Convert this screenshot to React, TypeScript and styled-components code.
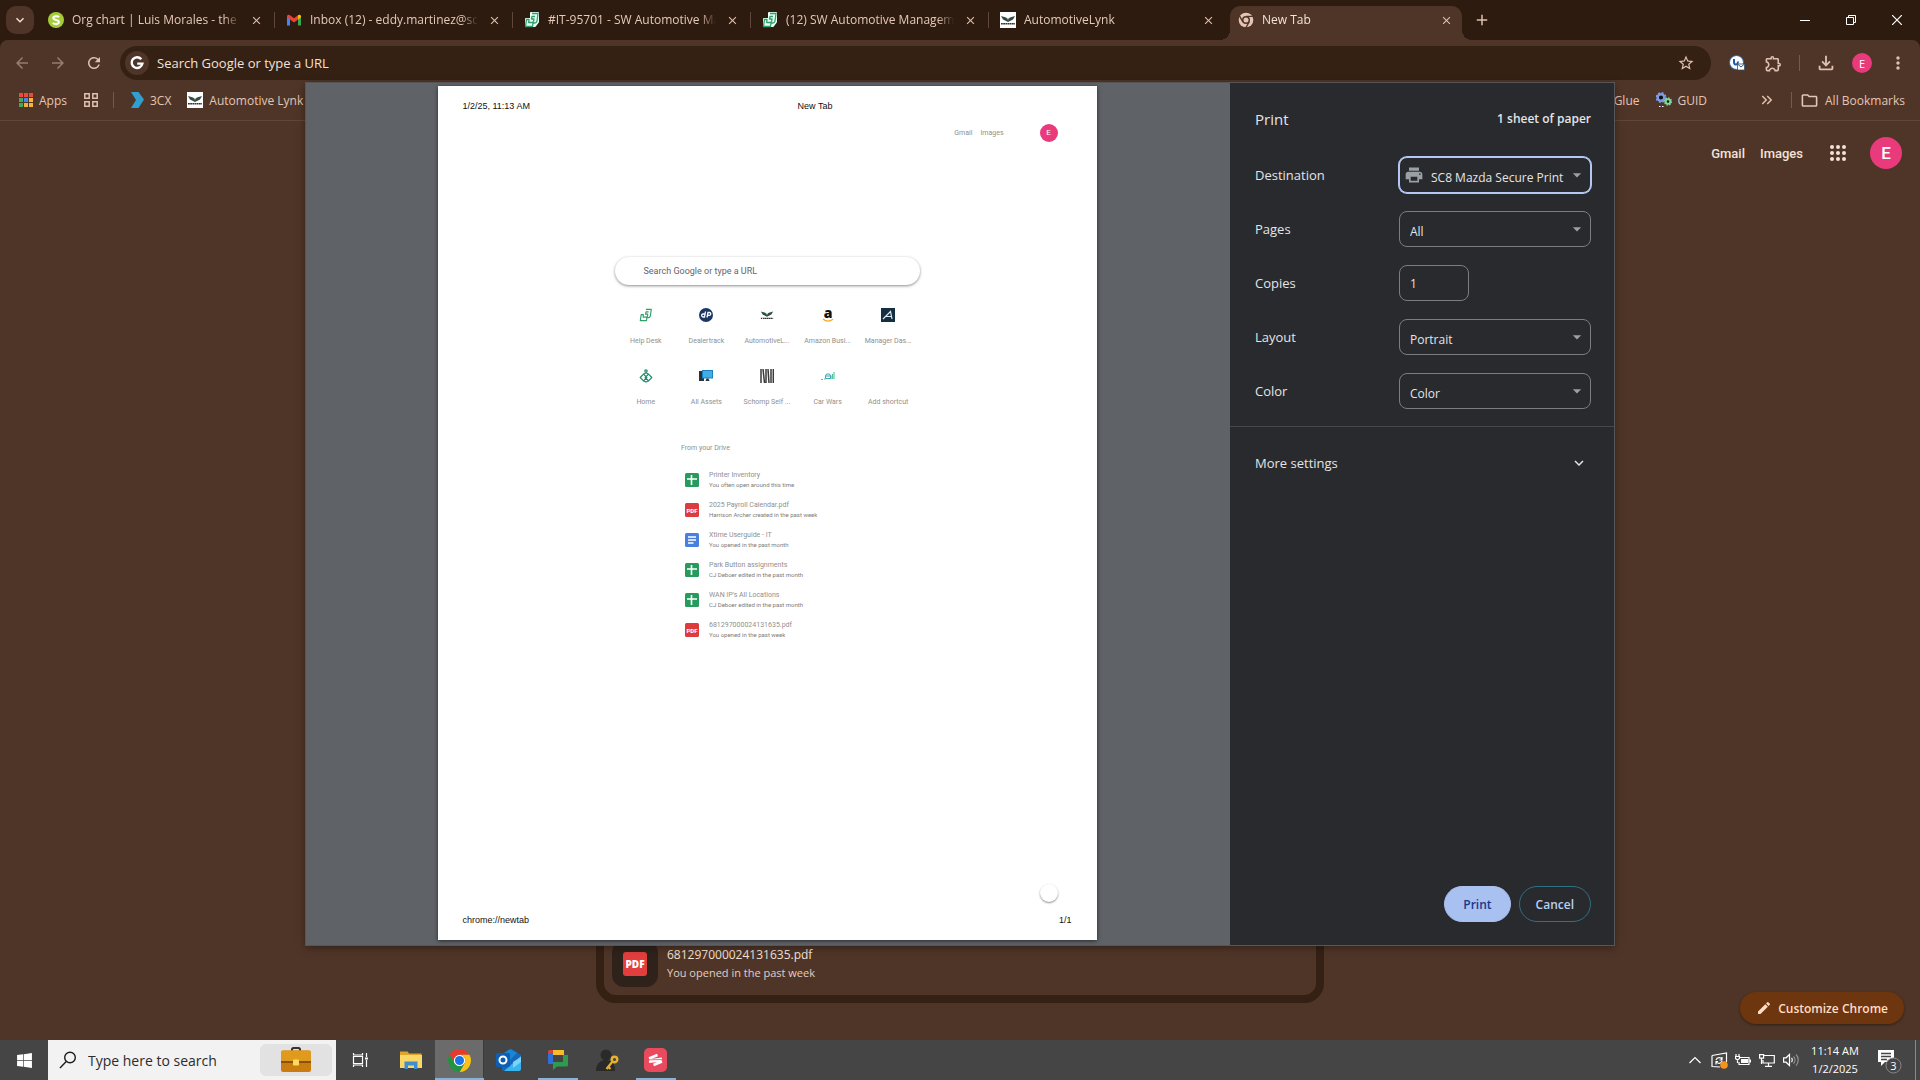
import React from "react";
import styled, { createGlobalStyle, css } from "styled-components";
import {
  MdArrowBack,
  MdArrowForward,
  MdRefresh,
  MdStarBorder,
  MdOutlineExtension,
  MdMoreVert,
  MdOutlineFolder,
  MdPrint,
  MdEdit,
  MdExpandMore,
  MdArrowDropDown,
  MdClose,
  MdAdd,
  MdOutlineFileDownload,
  MdKeyboardDoubleArrowRight,
} from "react-icons/md";
import { FaWindows } from "react-icons/fa";

const c = {
  frame: "#2e1b0f",
  surface: "#4f3527",
  field: "#352014",
  line: "#61463a",
  tint: "#e0c0ae",
  text: "#f3e2d8",
  panel: "#292a2d",
  blue: "#a8c1f0",
};

const GlobalStyle = createGlobalStyle`
  *, *::before, *::after { box-sizing: border-box; }
  body {
    margin: 0;
    background: ${c.surface};
    color: ${c.text};
    font-family: "Open Sans", "Noto Sans", sans-serif;
    font-size: 12px;
  }
  button, input, select { font: inherit; color: inherit; margin: 0; }
  button { background: none; border: 0; padding: 0; cursor: pointer; }
  a { color: inherit; text-decoration: none; }
  svg { display: block; flex: none; }
  ul, h1, h2, p { margin: 0; padding: 0; list-style: none; font-weight: 400; }
`;

const Screen = styled.div`
  display: flex;
  flex-direction: column;
  min-height: 100vh;
`;

const Browser = styled.div`
  position: relative;
  flex: 1;
  display: flex;
  flex-direction: column;
  background: ${c.surface};
`;

/* ---------- tab strip ---------- */

const TabStrip = styled.header`
  display: flex;
  height: 40px;
  background: ${c.frame};
`;

const TabSearch = styled.button`
  display: grid;
  place-items: center;
  width: 28px;
  height: 28px;
  margin: 6px 3px 0 6px;
  border-radius: 10px;
  background: ${c.surface};
`;

const TabSlot = styled.div<{ $divider?: boolean }>`
  position: relative;
  flex: 0 1 238px;
  min-width: 0;
  padding: 6px 3px 0;
  ${(p) =>
    p.$divider &&
    css`
      &::after {
        content: "";
        position: absolute;
        right: 0;
        top: 12px;
        width: 1px;
        height: 16px;
        background: ${c.line};
      }
    `}
`;

const TabBody = styled.div<{ $active?: boolean }>`
  position: relative;
  display: flex;
  align-items: center;
  gap: 8px;
  height: 34px;
  padding: 0 8px 6px;
  color: ${(p) => (p.$active ? c.text : "#e6c9b8")};
  ${(p) =>
    p.$active &&
    css`
      background: ${c.surface};
      border-radius: 10px 10px 0 0;
      &::before,
      &::after {
        content: "";
        position: absolute;
        bottom: 0;
        width: 10px;
        height: 10px;
      }
      &::before {
        left: -10px;
        background: radial-gradient(circle at 0 0, transparent 10px, ${c.surface} 10px);
      }
      &::after {
        right: -10px;
        background: radial-gradient(circle at 100% 0, transparent 10px, ${c.surface} 10px);
      }
    `}
`;

const TabTitle = styled.button`
  flex: 1;
  min-width: 0;
  overflow: hidden;
  text-align: left;
  white-space: nowrap;
  line-height: 20px;
  mask-image: linear-gradient(to right, #000 calc(100% - 16px), transparent);
`;

const IconButton = styled.button<{ $size?: number; $dim?: boolean }>`
  display: grid;
  place-items: center;
  flex: none;
  width: ${(p) => p.$size ?? 36}px;
  height: ${(p) => p.$size ?? 36}px;
  color: ${c.tint};
  opacity: ${(p) => (p.$dim ? 0.5 : 1)};
`;

const NewTab = styled(IconButton)`
  width: 34px;
  margin-top: 2px;
`;

const WindowControls = styled.div`
  display: flex;
  margin-left: auto;
`;

const WindowButton = styled.button`
  display: grid;
  place-items: center;
  width: 46px;
  height: 40px;
  color: #fff;
`;

/* ---------- toolbar ---------- */

const Chrome = styled.div`
  border-bottom: 1px solid ${c.line};
  background: ${c.surface};
  border-radius: 8px 8px 0 0;
`;

const ChromeBacking = styled.div`
  background: linear-gradient(${c.frame} 12px, ${c.surface} 12px);
`;

const Toolbar = styled.div`
  display: flex;
  align-items: center;
  height: 42px;
  padding: 5px 4px 1px;
`;

const Omnibox = styled.form`
  flex: 1;
  display: flex;
  align-items: center;
  height: 34px;
  margin: 0 8px;
  padding: 0 7px 0 5px;
  border-radius: 17px;
  background: ${c.field};
`;

const OmniboxInput = styled.input`
  flex: 1;
  min-width: 0;
  margin-left: 8px;
  padding: 0;
  border: 0;
  outline: 0;
  background: none;
  font-size: 13px;
  &::placeholder { color: ${c.text}; opacity: 1; }
`;

const ToolbarDivider = styled.span<{ $gap: number }>`
  width: 1px;
  height: 16px;
  margin: 0 ${(p) => p.$gap}px;
  background: #79594a;
`;

const Avatar = styled.button<{ $size: number; $font: number }>`
  display: grid;
  place-items: center;
  flex: none;
  width: ${(p) => p.$size}px;
  height: ${(p) => p.$size}px;
  border-radius: 50%;
  background: #e93a7c;
  color: #fff;
  font-size: ${(p) => p.$font}px;
  line-height: 1;
`;

const AvatarSlot = styled.div`
  display: grid;
  place-items: center;
  width: 36px;
`;

const Bookmarks = styled.nav`
  display: flex;
  align-items: center;
  height: 38px;
  padding: 0 15px 2px 19px;
  color: #e3c6b5;
`;

const Bookmark = styled.a<{ $gap?: number }>`
  display: flex;
  align-items: center;
  gap: 6px;
  margin-right: ${(p) => p.$gap ?? 16}px;
  white-space: nowrap;
`;

const BookmarkGroup = styled.div`
  display: flex;
  padding-left: 17px;
`;

const Spacer = styled.span`
  flex: 1;
`;

/* ---------- new tab page ---------- */

const NewTabPage = styled.main`
  flex: 1;
  display: flex;
  flex-direction: column;
`;

const TopLinks = styled.div`
  display: flex;
  align-items: center;
  justify-content: flex-end;
  gap: 15px;
  padding: 16px 18px 0 0;
  font-family: Roboto, "Liberation Sans", sans-serif;
  font-size: 13px;
  font-weight: 500;
`;

const AppsGrid = styled.button`
  margin: 0 9px 0 12px;
  color: ${c.text};
`;

const DriveCard = styled.section`
  width: 728px;
  max-width: 100%;
  margin: auto auto 37px;
  padding: 8px;
  border: 8px solid ${c.field};
  border-radius: 20px;
`;

const DriveItem = styled.a`
  display: flex;
  align-items: center;
  gap: 9px;
`;

const DriveThumb = styled.span`
  display: grid;
  place-items: center;
  width: 46px;
  height: 46px;
  border-radius: 12px;
  background: #2f221b;
`;

const DriveText = styled.span`
  display: flex;
  flex-direction: column;
  font-size: 11px;
  line-height: 18px;
  color: #e0cfc5;
`;

const DriveTitle = styled.span`
  font-size: 12px;
  color: ${c.text};
`;

const Customize = styled.button`
  position: absolute;
  right: 16px;
  bottom: 16px;
  display: flex;
  align-items: center;
  gap: 6px;
  height: 32px;
  padding: 0 16px;
  border-radius: 16px;
  background: #6e360f;
  color: #ffdcc4;
  font-weight: 600;
  box-shadow: 0 1px 3px rgba(0, 0, 0, 0.4);
`;

/* ---------- print dialog ---------- */

const Dialog = styled.div`
  position: absolute;
  top: 82px;
  bottom: 94px;
  left: 50%;
  width: 1310px;
  max-width: 100%;
  transform: translateX(-50%);
  display: flex;
  border: 1px solid #55565a;
  background: ${c.panel};
  box-shadow: 0 2px 8px rgba(0, 0, 0, 0.35);
`;

const Preview = styled.div`
  flex: 1;
  display: flex;
  justify-content: center;
  padding: 3px 2px 5px 0;
  background: #5f6368;
`;

const Sheet = styled.article`
  display: flex;
  flex-direction: column;
  width: 659px;
  padding: 14px 25px;
  background: #fff;
  color: #8f8f8f;
  font-family: Roboto, "Noto Sans", sans-serif;
  font-size: 7px;
  box-shadow: 0 1px 4px rgba(0, 0, 0, 0.6);
`;

const SheetLine = styled.div`
  display: grid;
  grid-template-columns: 1fr auto 1fr;
  color: #111;
  font-family: "Liberation Sans", Arial, sans-serif;
  font-size: 9px;
  line-height: 12px;
`;

const SheetHeading = styled.span`
  padding-left: 96px;
`;

const SheetEnd = styled.span`
  text-align: right;
`;

const SheetTop = styled.div`
  display: flex;
  align-items: center;
  justify-content: flex-end;
  gap: 8px;
  height: 18px;
  margin: 12px 14px 0 0;
`;

const SheetAvatar = styled(Avatar)`
  margin-left: 28px;
`;

const SheetSearch = styled.div`
  width: 305px;
  height: 28px;
  margin: 115px auto 0;
  padding: 0 29px;
  border-radius: 14px;
  box-shadow: 0 1px 3px rgba(0, 0, 0, 0.45);
  color: #666;
  font-size: 9px;
  line-height: 28px;
`;

const Shortcuts = styled.ul`
  display: grid;
  grid-template-columns: repeat(5, 1fr);
  row-gap: 21px;
  width: 303px;
  margin: 23px auto 0;
`;

const Shortcut = styled.li`
  display: flex;
  flex-direction: column;
  align-items: center;
  gap: 14px;
  height: 40px;
  line-height: 10px;
  white-space: nowrap;
`;

const ShortcutIcon = styled.span`
  display: grid;
  place-items: center;
  width: 14px;
  height: 14px;
`;

const Files = styled.section`
  width: 172px;
  margin: 34px auto 0;
`;

const FilesTitle = styled.h2`
  font-size: 7px;
  line-height: 10px;
  margin-bottom: 12px;
`;

const FileRow = styled.li`
  display: flex;
  align-items: center;
  gap: 10px;
  height: 30px;
  padding-left: 4px;
  white-space: nowrap;
`;

const FileText = styled.div`
  display: flex;
  flex-direction: column;
  font-size: 6px;
  line-height: 10px;
  color: #7c7c7c;
`;

const FileName = styled.span`
  font-size: 7px;
  color: #8f8f8f;
`;

const SheetFab = styled.span`
  width: 18px;
  height: 18px;
  margin: auto 14px 12px auto;
  border-radius: 50%;
  box-shadow: 0 1px 2px rgba(0, 0, 0, 0.45);
`;

const Settings = styled.form`
  display: flex;
  flex-direction: column;
  width: 384px;
  color: #e4e5e8;
  font-size: 13px;
`;

const SettingsHead = styled.div`
  display: flex;
  align-items: center;
  justify-content: space-between;
  padding: 25px 23px 18px 25px;
  line-height: 22px;
`;

const SettingsTitle = styled.h1`
  font-size: 15px;
`;

const SheetCount = styled.span`
  font-size: 12px;
  font-weight: 600;
`;

const Field = styled.div`
  display: flex;
  align-items: center;
  justify-content: space-between;
  height: 54px;
  padding: 0 23px 0 25px;
`;

const FieldLabel = styled.label`
  font-size: 13px;
`;

const Control = styled.div`
  position: relative;
  width: 192px;
  height: 36px;
`;

const boxed = css`
  height: 36px;
  border: 1px solid #7b7d82;
  border-radius: 8px;
  background: ${c.panel};
  outline: 0;
  font-size: 12px;
`;

const Select = styled.select<{ $icon?: boolean }>`
  ${boxed}
  appearance: none;
  width: 100%;
  padding: 4px 22px 0 ${(p) => (p.$icon ? 31 : 10)}px;
  ${(p) => p.$icon && css`box-shadow: 0 0 0 1px #b4c8f5; border-color: #b4c8f5;`}
`;

const CopiesInput = styled.input`
  ${boxed}
  width: 70px;
  padding: 0 10px;
`;

const Overlay = styled.span<{ $side: "left" | "right" }>`
  position: absolute;
  top: 0;
  height: 36px;
  display: grid;
  place-items: center;
  color: #9aa0a6;
  pointer-events: none;
  ${(p) => (p.$side === "left" ? "left: 5px;" : "right: 4px;")}
`;

const MoreSettings = styled.button`
  display: flex;
  align-items: center;
  justify-content: space-between;
  height: 72px;
  margin-top: 8px;
  padding: 0 26px 0 25px;
  border-top: 1px solid #47484c;
`;

const DialogActions = styled.div`
  display: flex;
  justify-content: flex-end;
  gap: 8px;
  margin-top: auto;
  padding: 0 23px 23px;
`;

const ActionButton = styled.button<{ $primary?: boolean }>`
  height: 36px;
  padding: 0 ${(p) => (p.$primary ? 18 : 16)}px;
  border: 1px solid ${(p) => (p.$primary ? c.blue : "#2f7183")};
  border-radius: 18px;
  background: ${(p) => (p.$primary ? c.blue : "transparent")};
  color: ${(p) => (p.$primary ? "#17388c" : "#b9d0f5")};
  font-size: 12px;
  font-weight: 600;
`;

/* ---------- taskbar ---------- */

const Taskbar = styled.footer`
  display: flex;
  height: 40px;
  background: #454545;
  color: #fff;
`;

const Start = styled.button`
  display: grid;
  place-items: center;
  width: 48px;
  color: #fff;
`;

const TaskSearch = styled.label`
  display: flex;
  align-items: center;
  width: 288px;
  margin-right: 1px;
  padding: 0 4px 0 11px;
  background: #f2f2f2;
  color: #1c1c1c;
`;

const TaskSearchInput = styled.input`
  flex: 1;
  min-width: 0;
  margin-left: 11px;
  padding: 0;
  border: 0;
  outline: 0;
  background: none;
  font-size: 14px;
  &::placeholder { color: #2c2c2c; opacity: 1; }
`;

const SearchHighlight = styled.span`
  display: grid;
  place-items: center;
  width: 72px;
  height: 32px;
  border-radius: 6px;
  background: #e2e2e2;
`;

const TaskApp = styled.button<{ $state?: "open" | "active" }>`
  display: grid;
  place-items: center;
  width: 49px;
  ${(p) =>
    p.$state === "open" &&
    css`
      background: linear-gradient(#83b4dd, #83b4dd) bottom / 40px 2px no-repeat;
    `}
  ${(p) =>
    p.$state === "active" &&
    css`
      background: #6b6b6b;
      box-shadow: inset 0 -2px #83b4dd, inset -1px 0 #3c3c3c;
    `}
`;

const Tray = styled.div`
  display: flex;
  align-items: center;
  margin-left: auto;
`;

const TrayButton = styled.button`
  display: grid;
  place-items: center;
  width: 24px;
  height: 40px;
`;

const Clock = styled.time`
  display: flex;
  flex-direction: column;
  width: 64px;
  text-align: center;
  font-size: 11px;
  line-height: 18px;
`;

const Notifications = styled.button`
  width: 49px;
  height: 40px;
  padding: 2px 5px 0 0;
  border-right: 1px solid #8a8a8a;
  margin-right: 4px;
  display: grid;
  place-items: center;
`;

/* ---------- drawings ---------- */

const ChromeLogo = ({ size }: { size: number }) => (
  <svg width={size} height={size} viewBox="0 0 48 48">
    <circle cx="24" cy="24" r="12" fill="#fff" />
    <path fill="#e33b2e" d="M24 12h20.78A24 24 0 0 0 3.22 12L13.6 30A12 12 0 0 1 24 12Z" />
    <path fill="#fbc116" d="M34.39 30 24 48A24 24 0 0 0 44.78 12H24a12 12 0 0 1 10.39 18Z" />
    <path fill="#229342" d="M13.6 30 3.22 12A24 24 0 0 0 24 48l10.39-18a12 12 0 0 1-20.79 0Z" />
    <circle cx="24" cy="24" r="9.5" fill="#1a73e8" />
  </svg>
);

const ChromeMono = () => (
  <svg width="16" height="16" viewBox="0 0 48 48">
    <circle cx="24" cy="24" r="22" fill="#e6c4b3" />
    <circle cx="24" cy="24" r="12" fill={c.surface} />
    <path d="M24 13h21M33.5 29.5 23 48M14.5 29.5 4 11" stroke={c.surface} strokeWidth="4" />
    <circle cx="24" cy="24" r="7.5" fill="#e6c4b3" />
  </svg>
);

const SFavicon = () => (
  <svg width="16" height="16" viewBox="0 0 16 16">
    <circle cx="8" cy="8" r="8" fill="#a5cd39" />
    <path d="M11 5.2C10.3 3.9 5.3 3.7 5.3 6c0 2.400 5.600 1.500 5.600 4 0 2.500-5.200 2.300-6 .7" fill="none" stroke="#fff" strokeWidth="2" />
  </svg>
);

const GmailIcon = () => (
  <svg width="16" height="16" viewBox="0 0 16 16">
    <path fill="#4285f4" d="M1 4v9.500h3V7z" />
    <path fill="#34a853" d="M12 7v6.500h3V4z" />
    <path fill="#ea4335" d="M1 4.500C1 2.500 2.800 2.300 4 3.200l4 3 4-3v4.200l-4 3-4-3L1 5.300z" />
    <path fill="#fbbc04" d="M12 3.200c1.200-.9 3-.7 3 1.300v.8l-3 2.200z" />
  </svg>
);

const DeskIcon = ({ size = 16, plain }: { size?: number; plain?: boolean }) => (
  <svg width={size} height={size} viewBox="0 0 16 16">
    {!plain && <path d="M7 1h7v9l-3 4H2V7h5z" fill="#e9fff3" stroke="#e9fff3" strokeWidth="2" strokeLinejoin="round" />}
    <path
      d="M8 1.500h6l-1 7.500c-.2 1.300-1 2-2.300 2H9l-.5 3.500H1.500L2.500 7.500H5l-.3 3H8c1 0 1.500-.4 1.700-1.300L10 7H7.500L8 4.500h3"
      fill="none"
      stroke="#2f9e6c"
      strokeWidth="1.300"
      strokeLinejoin="round"
    />
  </svg>
);

const LynkIcon = ({ size = 16 }: { size?: number }) => (
  <svg width={size} height={size} viewBox="0 0 16 16">
    <path fill="#fff" d="M0 0h16v16H0z" />
    <path fill="#344b45" d="M1 4 6 5.500 8 7l2-1.500L15 4l-2 3.500L8 10 3 7.500z" />
    <path fill="#4d9b4d" d="m6.500 6.500 1.500 2 1.500-2L8 7.200z" />
    <path d="M1 11.800h14" stroke="#333" strokeWidth="1.600" strokeDasharray="1.800 .4" />
  </svg>
);

const GoogleG = () => (
  <svg width="24" height="24" viewBox="0 0 24 24">
    <circle cx="12" cy="12" r="12" fill={c.surface} />
    <path d="M16.300 8.200a5.400 5.400 0 1 0 1.100 4.400h-5.200" fill="none" stroke="#fff" strokeWidth="2.400" />
  </svg>
);

const AppsColor = () => (
  <svg width="14" height="14" viewBox="0 0 14 14">
    {["#e94b3c", "#e94b3c", "#e94b3c", "#44a660", "#4a86e8", "#f3b53b", "#44a660", "#f0b43c", "#f3b53b"].map((f, i) => (
      <rect key={i} x={(i % 3) * 5} y={Math.floor(i / 3) * 5} width="4" height="4" fill={f} />
    ))}
  </svg>
);

const FourSquares = () => (
  <svg width="14" height="14" viewBox="0 0 14 14" fill="none" stroke={c.tint} strokeWidth="1.500">
    <path d="M.8.8h4.400v4.400H.8zM8.800.8h4.400v4.400H8.800zM.8 8.800h4.400v4.400H.8zM8.800 8.800h4.400v4.400H8.800z" />
  </svg>
);

const Arrow3cx = () => (
  <svg width="13" height="16" viewBox="0 0 13 16">
    <path fill="#2f9fd0" d="M0 0h7.500L13 7.500 7.500 16H0l5-8z" />
  </svg>
);

const Gears = () => (
  <svg width="16" height="16" viewBox="0 0 16 16">
    <circle cx="5" cy="5.500" r="3.300" fill="#111" stroke="#7d9be8" strokeWidth="2.400" />
    <circle cx="5" cy="5.500" r="4.700" fill="none" stroke="#7d9be8" strokeWidth="1.500" strokeDasharray="2 1.700" />
    <circle cx="12" cy="9.500" r="2.300" fill="#111" stroke="#7ed89c" strokeWidth="2" />
    <circle cx="12" cy="9.500" r="3.500" fill="none" stroke="#7ed89c" strokeWidth="1.300" strokeDasharray="1.500 1.200" />
    <path d="M3 14h1.500v1H3zM6 14h1.500v1H6z" fill="#fff" />
  </svg>
);

const ExtensionBadge = () => (
  <svg width="16" height="16" viewBox="0 0 16 16">
    <circle cx="7.500" cy="7.500" r="7" fill="#fff" stroke="#2b5f9c" />
    <path d="M5 4v3c0 3 3.500 4 4-.5" fill="none" stroke="#1d5ba8" strokeWidth="2" />
    <path d="M8.500 9h7v6h-7z" fill="#fff" stroke="#33536f" strokeWidth=".8" />
    <path d="m8.500 9 3.500 3 3.500-3" fill="none" stroke="#33536f" />
  </svg>
);

const NineDots = () => (
  <svg width="16" height="16" viewBox="0 0 16 16" fill="currentColor">
    {[0, 1, 2, 3, 4, 5, 6, 7, 8].map((i) => (
      <circle key={i} cx={2 + (i % 3) * 6} cy={2 + Math.floor(i / 3) * 6} r="2" />
    ))}
  </svg>
);

const FileIcon = ({ kind, size }: { kind: string; size: number }) => (
  <svg width={size} height={size} viewBox="0 0 14 14">
    <rect width="14" height="14" rx="1.500" fill={kind === "pdf" ? "#dc3c3c" : kind === "doc" ? "#4a7fe0" : "#279a5e"} />
    {kind === "pdf" && (
      <text x="7" y="9.500" textAnchor="middle" fontSize="6" fontWeight="800" fill="#fff">PDF</text>
    )}
    {kind === "doc" && <path d="M3 4h8M3 7h8M3 10h5.500" stroke="#fff" strokeWidth="1.400" />}
    {kind === "sheet" && <path d="M2 6h10M6.500 2v10" stroke="#fff" strokeWidth="1.600" />}
  </svg>
);

const PdfThumb = () => (
  <svg width="24" height="24" viewBox="0 0 24 24">
    <rect width="24" height="24" rx="3" fill="#e33e3e" />
    <text x="12" y="16" textAnchor="middle" fontSize="10" fontWeight="800" fill="#fff">PDF</text>
  </svg>
);

const ShortcutArt = ({ kind }: { kind: string }) => {
  if (kind === "desk") return <DeskIcon size={14} plain />;
  if (kind === "lynk") return <LynkIcon size={14} />;
  return (
    <svg width="14" height="14" viewBox="0 0 14 14">
      {kind === "dealer" && (
        <>
          <circle cx="7" cy="7" r="7" fill="#1c3766" />
          <path d="M6.500 3.500 5.500 9H4a1.300 1.300 0 0 1 .3-3h2M8 9.500 9 4.500h1.500a1.200 1.200 0 0 1-.3 2.800H8.800" fill="none" stroke="#fff" strokeWidth="1.300" />
        </>
      )}
      {kind === "amazon" && (
        <>
          <text x="7" y="9.500" textAnchor="middle" fontFamily="Open Sans" fontSize="14" fontWeight="800" fill="#111">a</text>
          <path d="M2 11c3 2.500 7 2.500 10 .3" fill="none" stroke="#f6a623" strokeWidth="1.200" />
        </>
      )}
      {kind === "manager" && (
        <>
          <path fill="#152f42" d="M0 0h14v14H0z" />
          <path d="M2 11 9.500 3.500 11 11M5 8.500h6" fill="none" stroke="#dfe9ee" strokeWidth="1.200" />
        </>
      )}
      {kind === "home" && (
        <g fill="none" stroke="#218a6e" strokeWidth="1.200">
          <path d="M1.200 8.500 4.500 5.200 7.800 8.500 4.500 11.800zM6.200 8.500l3.300-3.300 3.300 3.300-3.300 3.300z" strokeLinejoin="round" />
          <path d="M4.500 5.200 7 3.800l2.500 1.400M4.500 11.800 7 13l2.500-1.200" />
          <circle cx="7" cy="2" r="1.200" />
        </g>
      )}
      {kind === "assets" && (
        <>
          <path fill="#27343c" d="M0 2h5v10H0z" />
          <path fill="#1d7fc0" d="M3 1h11v8.500H3z" />
          <path fill="#3fb0e6" d="M4 2h9v6.500H4z" />
          <path fill="#27343c" d="M7.500 9.500h2l1 2.500h-4z" />
        </>
      )}
      {kind === "schomp" && (
        <path d="M1 0v14M3 0l1.500 14M6 0v14M8 0l1 14M11 0v14M13.300 0v14" stroke="#3a3a3a" strokeWidth="1.500" />
      )}
      {kind === "wars" && (
        <>
          <path d="M0 10.500h2M3 10h1.500M10 10V6.500M11.500 10V5M13 10V3" stroke="#4fc39d" strokeWidth="1.100" />
          <path d="M4.500 9.500V7l1-2h3l1 2v2.500zM4.500 7h5" fill="none" stroke="#3aa6b4" />
        </>
      )}
    </svg>
  );
};

const SearchGlass = () => (
  <svg width="18" height="18" viewBox="0 0 18 18" fill="none" stroke="#1c1c1c" strokeWidth="1.400">
    <circle cx="11" cy="6.500" r="5.300" />
    <path d="M7.200 10.500 1 17" />
  </svg>
);

const Briefcase = () => (
  <svg width="32" height="26" viewBox="0 0 32 26">
    <path d="M12 4V2.500C12 1.500 12.500 1 13.500 1h5c1 0 1.500.5 1.500 1.500V4" fill="none" stroke="#333" strokeWidth="2" />
    <rect x="1" y="3.500" width="30" height="21.500" rx="2" fill="#c97d10" />
    <path d="M1 5.500c0-1 1-2 2-2h26c1 0 2 1 2 2V14H1z" fill="#e09a1c" />
    <path d="M1 14h30v2H1z" fill="#8a5108" />
    <rect x="13" y="12.500" width="6" height="6" rx="1" fill="#ffd960" />
  </svg>
);

const TaskViewIcon = () => (
  <svg width="22" height="16" viewBox="0 0 22 16" fill="none" stroke="#fff" strokeWidth="1.200">
    <path d="M2.500 4.500h9v7h-9zM2.500 1v2h9V1M2.500 15v-2h9v2M15.500 1v4M15.500 8v7" />
    <path d="M14 5.500h3v2h-3z" fill="#fff" stroke="none" />
  </svg>
);

const FolderIcon = () => (
  <svg width="22" height="20" viewBox="0 0 22 20">
    <path fill="#e0a528" d="M0 1.500h7.500L9 3.500h12.500V8H0z" />
    <path fill="#fbd767" d="M0 5h22v13H0z" />
    <path fill="#3d8fd1" d="M4.500 11.500h13V19H14v-3.500H8V19H4.500z" />
  </svg>
);

const OutlookIcon = () => (
  <svg width="26" height="24" viewBox="0 0 26 24">
    <path fill="#1667b7" d="M6 7 15.500 1 25 7v14c0 1-1 2-2 2H8c-1 0-2-1-2-2z" />
    <path fill="#38b4ee" d="M25 8 8 23h15c1 0 2-1 2-2z" />
    <path fill="#1587d6" d="m14 1 7 4-9 9-4-3V5z" />
    <path fill="#7fd2f7" d="m17 14 8-5v5l-8 6z" />
    <rect y="5" width="14" height="14" rx="1.500" fill="#0c5fb4" />
    <circle cx="7" cy="12" r="3.500" fill="none" stroke="#fff" strokeWidth="2" />
  </svg>
);

const ChatIcon = () => (
  <svg width="22" height="22" viewBox="0 0 22 22">
    <path fill="#f7bb2d" d="M6 1h11v5H6z" />
    <path fill="#2e6fd8" d="M1 4c0-1 .8-1.500 1.500-1.500H6V15H2.500C1.500 15 1 14.500 1 13.500z" />
    <path fill="#2e9c50" d="M16 6h5v10c0 1-.8 1.500-1.500 1.500H10L6 21v-8h10z" />
    <path fill="#d8442f" d="M2.500 1H6v3H1c0-2 .5-3 1.500-3z" />
  </svg>
);

const KeyUserIcon = () => (
  <svg width="24" height="24" viewBox="0 0 24 24">
    <circle cx="11" cy="7" r="5.500" fill="#2a2a2a" />
    <path fill="#2a2a2a" d="M1 23c0-7 4-11 10-11s9 4 9 11z" />
    <circle cx="19.500" cy="11.500" r="2.800" fill="none" stroke="#e6b32e" strokeWidth="2.400" />
    <path d="m17.500 13.500-6 7.500M13.500 19l2 2" stroke="#e6b32e" strokeWidth="2.200" />
  </svg>
);

const RedAppIcon = () => (
  <svg width="23" height="24" viewBox="0 0 23 24">
    <rect width="23" height="24" rx="5" fill="#ea4a5e" />
    <path d="m5 10.500 8.500-3.500M5.500 12.500 18 10.800M5 13.800l12.500-1.600M9.500 17l8.500-3.500" stroke="#fff" strokeWidth="2.600" />
    <path d="m4 11.900 15-.4" stroke="#ea4a5e" strokeWidth=".8" />
  </svg>
);

const line = { fill: "none", stroke: "#fff", strokeWidth: 1.2 };

const ChevronUp = () => (
  <svg width="12" height="8" viewBox="0 0 12 8" {...line}><path d="m.5 7 5.500-5.500L11.500 7" /></svg>
);

const UpdateIcon = () => (
  <svg width="17" height="17" viewBox="0 0 17 17" {...line}>
    <path d="M1 3.500 15.500 1v9M1 3.500v11l8 .5" />
    <path d="M5 8c1-3 5-3 6-.5M11 5v3H8.500M11 9c-1 3-4.500 3-6 .5M5 12.500v-3h2" />
    <circle cx="13" cy="13" r="3.800" fill="#f5941f" stroke="none" />
  </svg>
);

const BatteryIcon = () => (
  <svg width="16" height="12" viewBox="0 0 16 12" {...line}>
    <path d="M5 3.500h9v7H4V8" />
    <path d="M6 5h7v4H6zM14.500 5.500H16v3h-1.500z" fill="#fff" stroke="none" />
    <path d="M1 0v2M4 0v2M.5 2.500h4v2l-2 1.500L.5 4.500zM2.500 6v3" />
  </svg>
);

const NetworkIcon = () => (
  <svg width="16" height="13" viewBox="0 0 16 13" {...line}>
    <path d="M5 1.500h10.300v7.500H4V6M9.500 9v3M6 12.300h7M.6.6h4v3.500h-4zM2.500 4v6" />
  </svg>
);

const VolumeIcon = () => (
  <svg width="16" height="14" viewBox="0 0 16 14" {...line}>
    <path d="M.6 4.800h2.500L6.500 1.500v11L3.100 9.200H.6zM8.500 5c1 1 1 3 0 4" />
    <path d="M10.500 3.500c2 2 2 5 0 7M13 1.500c3 3 3 8 0 11" stroke="#929292" />
  </svg>
);

const NotificationIcon = () => (
  <svg width="26" height="28" viewBox="0 0 26 28">
    <path fill="#fff" d="M2 3h16v12H9l-4 4v-4H2z" />
    <path d="M5 6.500h10M5 9.500h10M5 12.500h6" stroke="#454545" strokeWidth="1.300" />
    <circle cx="17.500" cy="18.500" r="7.500" fill="#454545" stroke="#888" />
    <text x="17.500" y="22.500" textAnchor="middle" fontSize="11" fill="#fff">3</text>
  </svg>
);

/* ---------- data ---------- */

const tabs = [
  { title: "Org chart | Luis Morales - the Sl", icon: <SFavicon /> },
  { title: "Inbox (12) - eddy.martinez@sch", icon: <GmailIcon /> },
  { title: "#IT-95701 - SW Automotive Ma", icon: <DeskIcon /> },
  { title: "(12) SW Automotive Managem", icon: <DeskIcon /> },
  { title: "AutomotiveLynk", icon: <LynkIcon /> },
  { title: "New Tab", icon: <ChromeMono />, active: true },
];

const shortcuts = [
  ["desk", "Help Desk"],
  ["dealer", "Dealertrack"],
  ["lynk", "AutomotiveL..."],
  ["amazon", "Amazon Busi..."],
  ["manager", "Manager Das..."],
  ["home", "Home"],
  ["assets", "All Assets"],
  ["schomp", "Schomp Self ..."],
  ["wars", "Car Wars"],
  ["", "Add shortcut"],
];

const files = [
  ["sheet", "Printer Inventory", "You often open around this time"],
  ["pdf", "2025 Payroll Calendar.pdf", "Harrison Archer created in the past week"],
  ["doc", "Xtime Userguide - IT", "You opened in the past month"],
  ["sheet", "Park Button assignments", "CJ Deboer edited in the past month"],
  ["sheet", "WAN IP's All Locations", "CJ Deboer edited in the past month"],
  ["pdf", "681297000024131635.pdf", "You opened in the past week"],
];

const SelectField = ({ id, label, value, icon }: { id: string; label: string; value: string; icon?: boolean }) => (
  <Field>
    <FieldLabel htmlFor={id}>{label}</FieldLabel>
    <Control>
      <Select id={id} $icon={icon} defaultValue={value}>
        <option>{value}</option>
      </Select>
      {icon && <Overlay $side="left"><MdPrint size={20} /></Overlay>}
      <Overlay $side="right"><MdArrowDropDown size={20} /></Overlay>
    </Control>
  </Field>
);

export default function App() {
  return (
    <Screen>
      <GlobalStyle />
      <Browser>
        <TabStrip>
          <TabSearch aria-label="Search tabs"><MdExpandMore size={16} /></TabSearch>
          {tabs.map((t, i) => (
            <TabSlot key={t.title} $divider={i < 4}>
              <TabBody $active={t.active}>
                {t.icon}
                <TabTitle>{t.title}</TabTitle>
                <IconButton $size={16} aria-label="Close tab"><MdClose size={13} /></IconButton>
              </TabBody>
            </TabSlot>
          ))}
          <NewTab aria-label="New tab"><MdAdd size={18} /></NewTab>
          <WindowControls>
            <WindowButton aria-label="Minimize">
              <svg width="10" height="10" viewBox="0 0 10 10"><path d="M0 5.500h10" stroke="#fff" /></svg>
            </WindowButton>
            <WindowButton aria-label="Restore">
              <svg width="10" height="10" viewBox="0 0 10 10" fill="none" stroke="#fff">
                <path d="M.5 2.500h7v7h-7zM2.500 2.500v-2h7v7h-2" />
              </svg>
            </WindowButton>
            <WindowButton aria-label="Close">
              <svg width="10" height="10" viewBox="0 0 10 10"><path d="m0 0 10 10M10 0 0 10" stroke="#fff" strokeWidth="1.200" /></svg>
            </WindowButton>
          </WindowControls>
        </TabStrip>

        <ChromeBacking>
          <Chrome>
            <Toolbar>
              <IconButton $dim aria-label="Back"><MdArrowBack size={18} /></IconButton>
              <IconButton $dim aria-label="Forward"><MdArrowForward size={18} /></IconButton>
              <IconButton aria-label="Reload"><MdRefresh size={18} /></IconButton>
              <Omnibox onSubmit={(e) => e.preventDefault()}>
                <GoogleG />
                <OmniboxInput aria-label="Address" placeholder="Search Google or type a URL" />
                <IconButton aria-label="Bookmark this tab"><MdStarBorder size={18} /></IconButton>
              </Omnibox>
              <IconButton aria-label="Mail tracker"><ExtensionBadge /></IconButton>
              <IconButton aria-label="Extensions"><MdOutlineExtension size={19} /></IconButton>
              <ToolbarDivider $gap={8} />
              <IconButton aria-label="Downloads"><MdOutlineFileDownload size={22} /></IconButton>
              <AvatarSlot><Avatar $size={20} $font={11} aria-label="Profile">E</Avatar></AvatarSlot>
              <IconButton aria-label="Menu"><MdMoreVert size={20} /></IconButton>
            </Toolbar>
            <Bookmarks>
              <Bookmark href="#" $gap={17}><AppsColor />Apps</Bookmark>
              <Bookmark href="#" $gap={15} aria-label="Tab groups"><FourSquares /></Bookmark>
              <ToolbarDivider $gap={0} />
              <BookmarkGroup>
                <Bookmark href="#"><Arrow3cx />3CX</Bookmark>
                <Bookmark href="#"><LynkIcon />Automotive Lynk</Bookmark>
              </BookmarkGroup>
              <Spacer />
              <Bookmark href="#" $gap={16}>Glue</Bookmark>
              <Bookmark href="#" $gap={44}><Gears />GUID</Bookmark>
              <IconButton $size={32} aria-label="More bookmarks"><MdKeyboardDoubleArrowRight size={18} /></IconButton>
              <ToolbarDivider $gap={8} />
              <Bookmark href="#" $gap={0}><MdOutlineFolder size={19} />All Bookmarks</Bookmark>
            </Bookmarks>
          </Chrome>
        </ChromeBacking>

        <NewTabPage>
          <TopLinks>
            <a href="#">Gmail</a>
            <a href="#">Images</a>
            <AppsGrid aria-label="Google apps"><NineDots /></AppsGrid>
            <Avatar $size={32} $font={17} aria-label="Account">E</Avatar>
          </TopLinks>
          <DriveCard>
            <DriveItem href="#">
              <DriveThumb><PdfThumb /></DriveThumb>
              <DriveText>
                <DriveTitle>681297000024131635.pdf</DriveTitle>
                You opened in the past week
              </DriveText>
            </DriveItem>
          </DriveCard>
        </NewTabPage>
        <Customize><MdEdit size={16} />Customize Chrome</Customize>

        <Dialog role="dialog" aria-label="Print">
          <Preview>
            <Sheet>
              <SheetLine>
                <span>1/2/25, 11:13 AM</span>
                <SheetHeading>New Tab</SheetHeading>
                <span />
              </SheetLine>
              <SheetTop>
                <span>Gmail</span>
                <span>Images</span>
                <SheetAvatar as="span" $size={18} $font={8}>E</SheetAvatar>
              </SheetTop>
              <SheetSearch>Search Google or type a URL</SheetSearch>
              <Shortcuts>
                {shortcuts.map(([kind, label]) => (
                  <Shortcut key={label}>
                    <ShortcutIcon>{kind && <ShortcutArt kind={kind} />}</ShortcutIcon>
                    {label}
                  </Shortcut>
                ))}
              </Shortcuts>
              <Files>
                <FilesTitle>From your Drive</FilesTitle>
                <ul>
                  {files.map(([kind, name, note]) => (
                    <FileRow key={name}>
                      <FileIcon kind={kind} size={14} />
                      <FileText>
                        <FileName>{name}</FileName>
                        {note}
                      </FileText>
                    </FileRow>
                  ))}
                </ul>
              </Files>
              <SheetFab />
              <SheetLine>
                <span>chrome://newtab</span>
                <span />
                <SheetEnd>1/1</SheetEnd>
              </SheetLine>
            </Sheet>
          </Preview>
          <Settings onSubmit={(e) => e.preventDefault()}>
            <SettingsHead>
              <SettingsTitle>Print</SettingsTitle>
              <SheetCount>1 sheet of paper</SheetCount>
            </SettingsHead>
            <SelectField id="destination" label="Destination" value="SC8 Mazda Secure Print" icon />
            <SelectField id="pages" label="Pages" value="All" />
            <Field>
              <FieldLabel htmlFor="copies">Copies</FieldLabel>
              <Control><CopiesInput id="copies" defaultValue="1" /></Control>
            </Field>
            <SelectField id="layout" label="Layout" value="Portrait" />
            <SelectField id="color" label="Color" value="Color" />
            <MoreSettings type="button">
              More settings
              <MdExpandMore size={18} />
            </MoreSettings>
            <DialogActions>
              <ActionButton $primary>Print</ActionButton>
              <ActionButton type="button">Cancel</ActionButton>
            </DialogActions>
          </Settings>
        </Dialog>
      </Browser>

      <Taskbar>
        <Start aria-label="Start"><FaWindows size={17} /></Start>
        <TaskSearch>
          <SearchGlass />
          <TaskSearchInput placeholder="Type here to search" aria-label="Type here to search" />
          <SearchHighlight><Briefcase /></SearchHighlight>
        </TaskSearch>
        <TaskApp aria-label="Task view"><TaskViewIcon /></TaskApp>
        <TaskApp aria-label="File Explorer"><FolderIcon /></TaskApp>
        <TaskApp $state="active" aria-label="Chrome"><ChromeLogo size={23} /></TaskApp>
        <TaskApp aria-label="Outlook"><OutlookIcon /></TaskApp>
        <TaskApp $state="open" aria-label="Chat"><ChatIcon /></TaskApp>
        <TaskApp aria-label="Credentials"><KeyUserIcon /></TaskApp>
        <TaskApp $state="open" aria-label="Remote support"><RedAppIcon /></TaskApp>
        <Tray>
          <TrayButton aria-label="Show hidden icons"><ChevronUp /></TrayButton>
          <TrayButton aria-label="Updates"><UpdateIcon /></TrayButton>
          <TrayButton aria-label="Battery"><BatteryIcon /></TrayButton>
          <TrayButton aria-label="Network"><NetworkIcon /></TrayButton>
          <TrayButton aria-label="Volume"><VolumeIcon /></TrayButton>
          <Clock><span>11:14 AM</span><span>1/2/2025</span></Clock>
          <Notifications aria-label="Notifications"><NotificationIcon /></Notifications>
        </Tray>
      </Taskbar>
    </Screen>
  );
}
